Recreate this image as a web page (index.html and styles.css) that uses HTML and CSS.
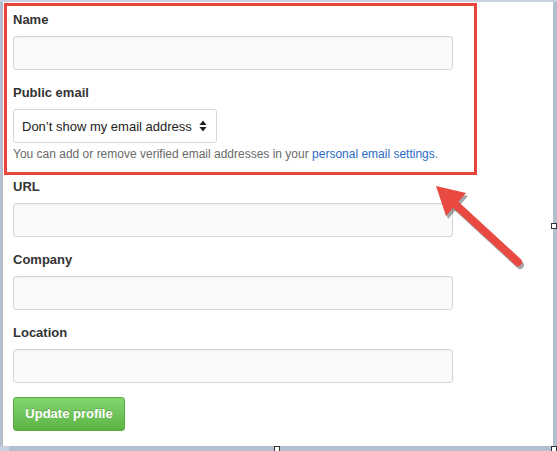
FILE: index.html
```html
<!DOCTYPE html>
<html>
<head>
<meta charset="utf-8">
<link rel="stylesheet" href="styles.css">
</head>
<body>
<div class="screen">
  <div class="topband"></div>
  <div class="main">
    <div class="panel">
      <form class="form">
        <div class="group">
          <label class="label">Name</label>
          <div class="input"></div>
        </div>
        <div class="group">
          <label class="label">Public email</label>
          <div class="select">
            <span class="select-text">Don’t show my email address</span>
            <svg class="caret" width="8" height="12" viewBox="0 0 8 12"><path d="M4 0.5 L7.6 5 H0.4 Z M0.4 7 H7.6 L4 11.5 Z" fill="#222"/></svg>
          </div>
          <p class="note">You can add or remove verified email addresses in your <a class="link">personal email settings</a>.</p>
        </div>
        <div class="group url">
          <label class="label">URL</label>
          <div class="input"></div>
        </div>
        <div class="group">
          <label class="label">Company</label>
          <div class="input"></div>
        </div>
        <div class="group">
          <label class="label">Location</label>
          <div class="input"></div>
        </div>
        <div class="btn">Update profile</div>
      </form>
      <div class="highlight"></div>
      <svg class="arrow" width="110" height="110" viewBox="0 0 110 110">
        <g transform="translate(2 3)">
          <line x1="85" y1="79" x2="23" y2="22" stroke="rgba(0,0,0,0.35)" stroke-width="8" stroke-linecap="round"/>
          <polygon points="3,3 13,33 33,10" fill="rgba(0,0,0,0.35)"/>
        </g>
        <line x1="85" y1="79" x2="23" y2="22" stroke="#e84a42" stroke-width="8" stroke-linecap="round"/>
        <polygon points="3,3 13,33 33,10" fill="#e84a42"/>
      </svg>
      <div class="handle h-right"></div>
    </div>
    <div class="strip"></div>
  </div>
  <div class="bottomband"><div class="bb-left"></div><div class="handle h-bottom"></div><div class="handle h-corner"></div></div>
</div>
</body>
</html>
```
FILE: styles.css
```css
html, body {
  margin: 0;
  padding: 0;
}
body {
  width: 557px;
  height: 451px;
  overflow: hidden;
  background: #b3bfd1;
  font-family: "Liberation Sans", Arial, sans-serif;
}
.screen {
  display: flex;
  flex-direction: column;
  height: 451px;
  position: relative;
}
.topband {
  height: 2px;
  background: #c9d1e0;
}
.main {
  display: flex;
  height: 444px;
}
.panel {
  position: relative;
  width: 550px;
  margin-left: 2px;
  background: #fff;
  border-left: 1px solid #b9b9b9;
}
.strip {
  flex: 1;
  background: #b3bfd1;
}
.bottomband {
  height: 5px;
  background: #b3bfd1;
  display: flex;
}
.bb-left {
  width: 9px;
  background: #c9d1e0;
}
.form {
  display: flex;
  flex-direction: column;
  padding: 8px 0 0 10px;
  margin: 0;
}
.group {
  display: flex;
  flex-direction: column;
  align-items: flex-start;
  margin-bottom: 13px;
}
.label {
  font-size: 13px;
  font-weight: bold;
  line-height: 20px;
  color: #333;
  margin-bottom: 6px;
}
.input {
  width: 438px;
  height: 32px;
  background: #fafafa;
  border: 1px solid #d6d6d6;
  border-radius: 3px;
  box-shadow: inset 0 1px 2px rgba(0,0,0,0.04);
}
.select {
  display: flex;
  align-items: center;
  justify-content: space-between;
  box-sizing: border-box;
  width: 204px;
  height: 34px;
  padding: 0 9px 0 8px;
  border: 1px solid #d6d6d6;
  border-radius: 3px;
  background: #fff;
  font-size: 13px;
  color: #222;
}
.select-text {
  white-space: nowrap;
}
.caret {
  flex: none;
}
.note {
  margin: 3px 0 0;
  font-size: 12px;
  line-height: 16px;
  color: #6a6a6a;
}
.link {
  color: #2a6bc2;
}
.group.url {
  margin-top: 2px;
}
.btn {
  align-self: flex-start;
  margin-top: 1px;
  width: 110px;
  height: 32px;
  line-height: 32px;
  text-align: center;
  border: 1px solid #5ca941;
  border-radius: 3px;
  background: linear-gradient(#82d570, #5db445);
  color: #fff;
  font-size: 13px;
  font-weight: bold;
  text-shadow: 0 -1px 0 rgba(0,0,0,0.2);
}
.highlight {
  position: absolute;
  left: 1px;
  top: 1px;
  width: 467px;
  height: 166px;
  border: 3px solid #e8453c;
}
.arrow {
  position: absolute;
  left: 430px;
  top: 181px;
}
.handle {
  position: absolute;
  width: 4px;
  height: 4px;
  background: #fff;
  border: 1px solid #333;
}
.h-right {
  left: 548px;
  top: 221px;
}
.h-bottom {
  left: 274px;
  top: 446px;
}
.h-corner {
  left: 551px;
  top: 446px;
}
```
